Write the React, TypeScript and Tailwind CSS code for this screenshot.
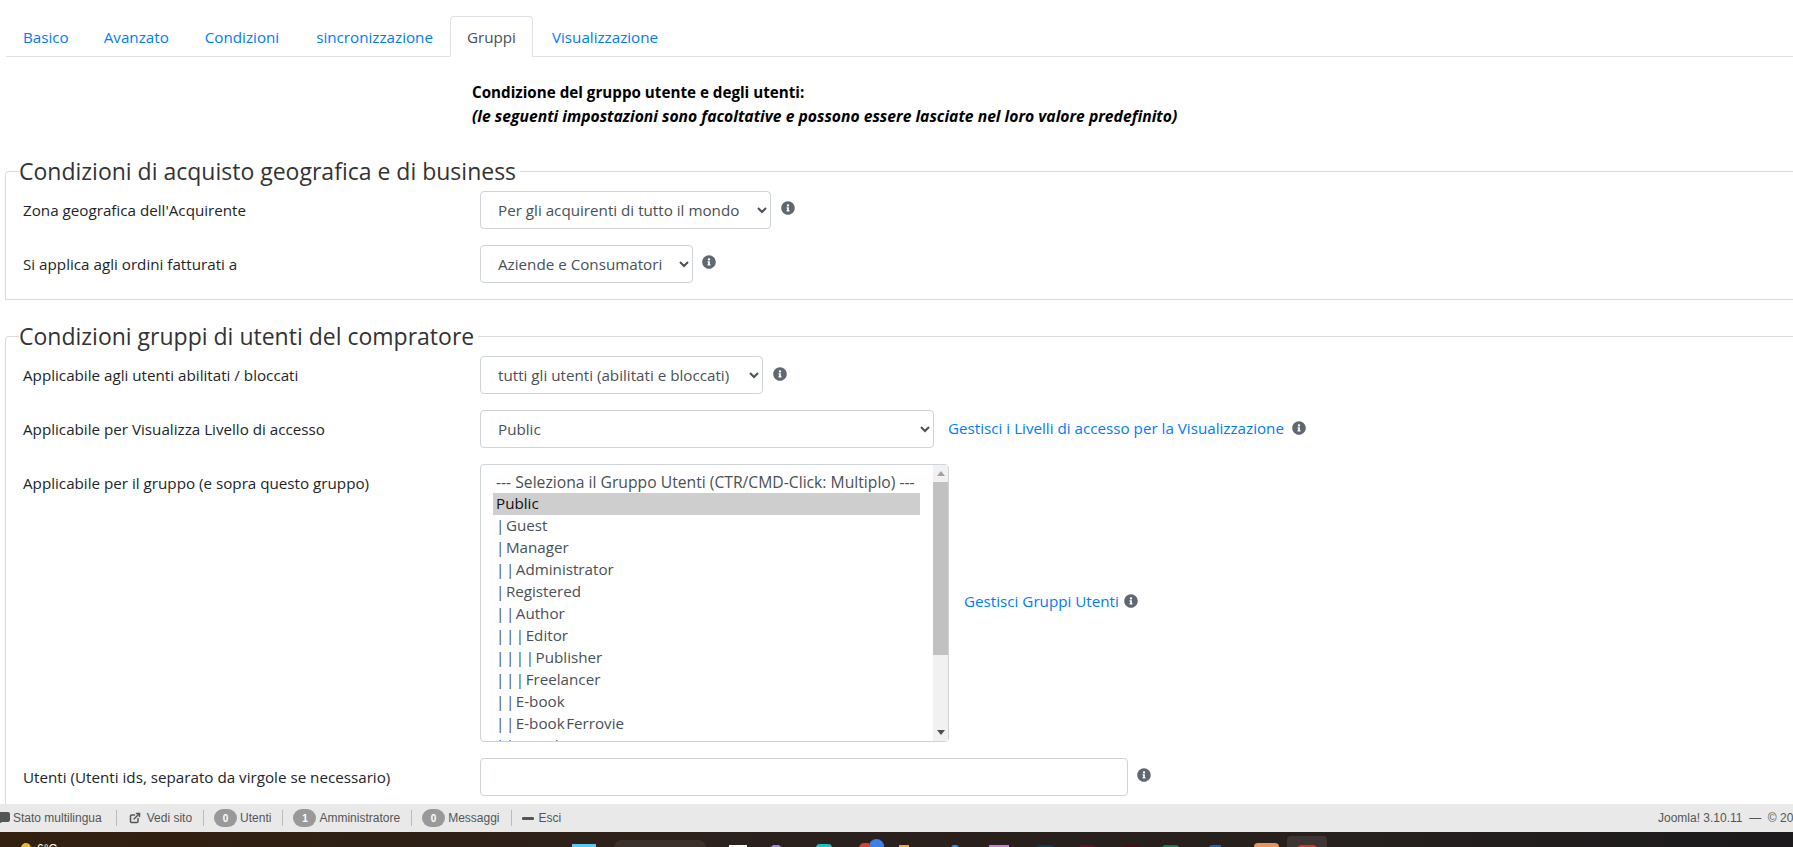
import { ExternalLink } from "lucide-react";

const tabs = [
  { label: "Basico", cls: "" },
  { label: "Avanzato", cls: "ml-[1px]" },
  { label: "Condizioni", cls: "ml-[2px]" },
  { label: "sincronizzazione", cls: "ml-[3px]" },
  { label: "Gruppi", cls: "" },
  { label: "Visualizzazione", cls: "ml-[2px]" },
];

const groups = [
  "Public",
  "| Guest",
  "| Manager",
  "| | Administrator",
  "| Registered",
  "| | Author",
  "| | | Editor",
  "| | | | Publisher",
  "| | | Freelancer",
  "| | E-book",
  "| | E-book Ferrovie",
  "| | Newsletter",
];

// only the top edge of each taskbar icon is on screen
const trayIcons = [
  "ml-[515px] mt-[12px] h-[4px] w-[24px] bg-[#5cc8f0]",
  "ml-[18px] mt-[8px] h-[10px] w-[92px] rounded-t-[8px] bg-[#3a302c]",
  "ml-[23px] mt-[13px] h-[3px] w-[18px] bg-white",
  "ml-[24px] mt-[13px] h-[3px] w-[10px] rounded-t-full bg-[#9a8ad8]",
  "ml-[35px] mt-[12px] h-[4px] w-[16px] rounded-t-full bg-[#23bfc0]",
  "ml-[27px] mt-[11px] h-[5px] w-[10px] rounded-tl-full bg-[#d8403a]",
  "mt-[7px] h-[9px] w-[15px] rounded-t-full bg-[#3b82e8]",
  "ml-[15px] mt-[13px] h-[3px] w-[10px] bg-[#e8b020]",
  "ml-[42px] mt-[13px] h-[3px] w-[8px] rounded-t-full bg-[#2a8ce0]",
  "ml-[30px] mt-[13px] h-[3px] w-[20px] border-x-2 border-t-2 border-[#c77ddc]",
  "ml-[27px] mt-[13px] h-[3px] w-[18px] rounded-t bg-[#0f3a4a]",
  "ml-[25px] mt-[13px] h-[3px] w-[16px] rounded-t bg-[#5a1030]",
  "ml-[27px] mt-[13px] h-[3px] w-[17px] rounded-t bg-[#4a0c10]",
  "ml-[23px] mt-[13px] h-[3px] w-[17px] rounded-t bg-[#1a7a4a]",
  "ml-[30px] mt-[13px] h-[3px] w-[12px] rounded-tl-lg bg-[#2a5ca8]",
  "ml-[33px] mt-[11px] h-[5px] w-[25px] rounded-t bg-[#e8945a]",
];

function InfoIcon() {
  return (
    <svg viewBox="0 0 512 512" className="h-[14px] w-[14px] shrink-0" fill="#5f6771">
      <path d="M256 8C119 8 8 119 8 256s111 248 248 248 248-111 248-248S393 8 256 8zm0 110c23 0 42 19 42 42s-19 42-42 42-42-19-42-42 19-42 42-42zm56 254c0 7-5 12-12 12h-88c-7 0-12-5-12-12v-24c0-7 5-12 12-12h12v-64h-12c-7 0-12-5-12-12v-24c0-7 5-12 12-12h64c7 0 12 5 12 12v100h12c7 0 12 5 12 12v24z" />
    </svg>
  );
}

function Row({ label, children, className }: { label: string; children: React.ReactNode; className?: string }) {
  return (
    <div className={`flex items-start ${className ?? ""}`}>
      <label className="w-[474px] shrink-0 pl-[17px] pt-[9px] text-[15.2px] leading-[20px] text-[#212529]">{label}</label>
      {children}
    </div>
  );
}

function Sel({ value, width }: { value: string; width: string }) {
  return (
    <select
      defaultValue={value}
      className={`h-[38px] ${width} rounded border border-[#ced4da] bg-white pl-[13px] text-[15.2px] text-[#495057]`}
    >
      <option>{value}</option>
    </select>
  );
}

function Stat({ n, label }: { n: number; label: string }) {
  return (
    <span className="flex items-center gap-[3px]">
      <span className="flex h-[18px] w-[23px] items-center justify-center rounded-full bg-[#999] text-[10px] font-bold text-white">{n}</span>
      {label}
    </span>
  );
}

const Sep = () => <span className="ml-[11px] mr-[10px] h-[16px] w-px bg-[#bbb]" />;

export default function App() {
  return (
    <div className="flex h-screen w-full flex-col overflow-hidden bg-white font-['Open_Sans','Noto_Sans',sans-serif]">
      <main className="min-h-0 flex-1 overflow-hidden">
        <ul className="mt-[16px] ml-[6px] flex h-[41px] border-b border-[#dee2e6] text-[15.2px] leading-[24px]">
          {tabs.map((t) =>
            t.label === "Gruppi" ? (
              <li key={t.label} className="-mb-px h-[41px] rounded-t border border-[#dee2e6] border-b-white bg-white px-[16px] pt-[8px] text-[#495057]">{t.label}</li>
            ) : (
              <li key={t.label} className={`px-[17px] pt-[9px] text-[#007bff] ${t.cls}`}>{t.label}</li>
            ),
          )}
        </ul>

        <div className="mt-[23px] ml-[472px] text-[15.2px] font-bold leading-[24px] text-black">
          <p>Condizione del gruppo utente e degli utenti:</p>
          <p className="text-[15.7px] italic">(le seguenti impostazioni sono facoltative e possono essere lasciate nel loro valore predefinito)</p>
        </div>

        <fieldset className="mt-[29px] ml-[5px] rounded-tl border border-r-0 border-[#dcdcdc] pb-[16px]">
          <legend className="ml-[13px] pr-[4px] text-[23px] leading-[29px] text-[#333]">Condizioni di acquisto geografica e di business</legend>
          <Row label="Zona geografica dell'Acquirente" className="mt-[5px]">
            <Sel value="Per gli acquirenti di tutto il mondo" width="w-[291px]" />
            <span className="mt-[10px] ml-[10px]"><InfoIcon /></span>
          </Row>
          <Row label="Si applica agli ordini fatturati a" className="mt-[16px]">
            <Sel value="Aziende e Consumatori" width="w-[213px]" />
            <span className="mt-[10px] ml-[9px]"><InfoIcon /></span>
          </Row>
        </fieldset>

        <fieldset className="mt-[22px] ml-[5px] rounded-tl border border-r-0 border-[#dcdcdc] pb-[30px]">
          <legend className="ml-[13px] pr-[4px] text-[23px] leading-[29px] text-[#333]">Condizioni gruppi di utenti del compratore</legend>
          <Row label="Applicabile agli utenti abilitati / bloccati" className="mt-[5px]">
            <Sel value="tutti gli utenti (abilitati e bloccati)" width="w-[283px]" />
            <span className="mt-[11px] ml-[10px]"><InfoIcon /></span>
          </Row>
          <Row label="Applicabile per Visualizza Livello di accesso" className="mt-[16px]">
            <Sel value="Public" width="w-[454px]" />
            <a className="mt-[8px] ml-[14px] text-[15.2px] leading-[20px] text-[#007bff]">Gestisci i Livelli di accesso per la Visualizzazione</a>
            <span className="mt-[11px] ml-[8px]"><InfoIcon /></span>
          </Row>
          <Row label="Applicabile per il gruppo (e sopra questo gruppo)" className="mt-[16px]">
            <div className="relative h-[278px] w-[469px] shrink-0">
              <select
                multiple
                defaultValue={["Public"]}
                className="h-full w-full overflow-y-scroll rounded border border-[#ced4da] pl-[12px] pr-[28px] py-[6px] text-[15.2px] text-[#495057] [scrollbar-width:none]"
              >
                <option className="h-[22px] py-0 pl-[3px] text-[15.7px] leading-[22px]">--- Seleziona il Gruppo Utenti (CTR/CMD-Click: Multiplo) ---</option>
                {groups.map((g) => (
                  <option key={g} className="h-[22px] py-0 pl-[3px] leading-[22px] [word-spacing:-2.4px]">{g}</option>
                ))}
              </select>
              <div className="absolute top-[1px] right-[1px] bottom-[1px] flex w-[15px] flex-col items-center bg-[#f1f1f1]">
                <svg viewBox="0 0 8 5" className="mt-[6px] h-[5px] w-[8px]" fill="#a3a3a3"><path d="M4 0l4 5H0z" /></svg>
                <div className="mt-[6px] h-[173px] w-full bg-[#c1c1c1]" />
                <svg viewBox="0 0 8 5" className="mt-auto mb-[6px] h-[5px] w-[8px]" fill="#505050"><path d="M0 0h8L4 5z" /></svg>
              </div>
            </div>
            <a className="mt-[127px] ml-[15px] text-[15.2px] leading-[20px] text-[#007bff]">Gestisci Gruppi Utenti</a>
            <span className="mt-[130px] ml-[5px]"><InfoIcon /></span>
          </Row>
          <Row label="Utenti (Utenti ids, separato da virgole se necessario)" className="mt-[16px]">
            <input className="h-[38px] w-[648px] rounded border border-[#ced4da] bg-white" />
            <span className="mt-[10px] ml-[9px]"><InfoIcon /></span>
          </Row>
        </fieldset>
      </main>

      <footer className="flex h-[28px] shrink-0 items-center justify-between overflow-hidden bg-[#e9e9e9] font-['Liberation_Sans',Arial,sans-serif] text-[12px] text-[#555]">
        <div className="flex items-center">
          <svg viewBox="0 0 14 12" className="-ml-[4px] mr-[3px] h-[12px] w-[14px]" fill="#555">
            <path d="M2 0h10a2 2 0 0 1 2 2v6a2 2 0 0 1-2 2H6l-3 2v-2H2a2 2 0 0 1-2-2V2a2 2 0 0 1 2-2z" />
          </svg>
          <span>Stato multilingua</span>
          <span className="ml-[14px] mr-[12px] h-[16px] w-px bg-[#bbb]" />
          <span className="flex items-center gap-[6px]"><ExternalLink size={12} strokeWidth={3} />Vedi sito</span>
          <Sep />
          <Stat n={0} label="Utenti" />
          <Sep />
          <Stat n={1} label="Amministratore" />
          <Sep />
          <Stat n={0} label="Messaggi" />
          <Sep />
          <span className="flex items-center gap-[5px]"><span className="h-[3px] w-[12px] rounded-[1px] bg-[#555]" />Esci</span>
        </div>
        <span className="w-[135px] shrink-0 overflow-hidden whitespace-nowrap">Joomla! 3.10.11 &nbsp;—&nbsp; © 2022 Tutti i diritti</span>
      </footer>

      <div className="flex h-[15px] shrink-0 items-start overflow-hidden bg-[linear-gradient(90deg,#33200f,#2c211c_40%,#26201e_75%,#1c1a1c)]">
        <span className="ml-[21px] mt-[11px] h-[5px] w-[10px] rounded-t-full bg-[#e8b830]" />
        <span className="ml-[6px] mt-[10px] font-['Liberation_Sans',Arial,sans-serif] text-[12px] leading-[14px] text-white">6°C</span>
        {trayIcons.map((c) => (
          <span key={c} className={`shrink-0 ${c}`} />
        ))}
        <span className="ml-[8px] mt-[4px] flex h-[12px] w-[40px] shrink-0 justify-center rounded-t bg-[#3d3533] pt-[9px]">
          <span className="h-[4px] w-[20px] rounded-t-full bg-[#d83030]" />
        </span>
      </div>
    </div>
  );
}
